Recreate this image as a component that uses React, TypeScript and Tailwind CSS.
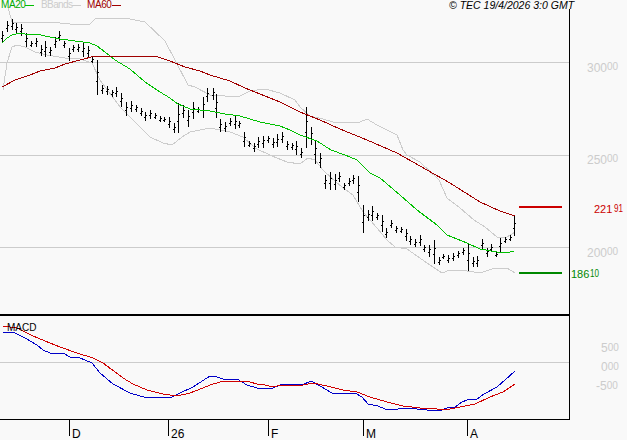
type Bar = [number, number, number];

const BARS: Bar[] = [
  [2, 31, 42], [7, 21, 32], [12, 19, 30], [16, 23, 33], [21, 24, 36], [26, 33, 47], [31, 41, 47], [36, 38, 47],
  [41, 45, 56], [45, 41, 57], [50, 47, 56], [55, 37, 48], [59, 31, 41], [64, 41, 48], [69, 48, 61], [73, 45, 52],
  [78, 44, 52], [83, 43, 57], [88, 46, 58], [92, 57, 63], [97, 60, 95], [102, 85, 94], [107, 86, 95], [112, 90, 97],
  [116, 87, 97], [121, 93, 107], [126, 102, 116], [131, 101, 112], [136, 105, 112], [141, 108, 116], [145, 112, 121],
  [150, 110, 119], [155, 113, 119], [160, 116, 122], [164, 117, 122], [169, 117, 128], [174, 123, 133], [178, 103, 133],
  [183, 105, 118], [188, 110, 127], [193, 102, 119], [198, 107, 113], [203, 97, 118], [207, 88, 102], [213, 88, 100],
  [216, 94, 118], [220, 119, 132], [225, 122, 132], [230, 118, 126], [235, 116, 129], [239, 121, 128], [244, 132, 147],
  [249, 141, 147], [254, 143, 152], [258, 137, 148], [263, 136, 148], [268, 136, 143], [273, 138, 148], [277, 134, 147],
  [282, 132, 143], [287, 141, 150], [292, 143, 150], [296, 141, 155], [301, 148, 158], [306, 107, 148], [311, 127, 145],
  [315, 140, 164], [320, 153, 168], [325, 175, 189], [330, 172, 190], [335, 174, 190], [339, 172, 182], [344, 183, 190],
  [349, 178, 186], [353, 175, 184], [358, 176, 202], [363, 205, 233], [368, 210, 221], [372, 206, 221], [377, 213, 220],
  [382, 215, 232], [386, 228, 238], [391, 220, 228], [396, 226, 233], [401, 227, 233], [406, 229, 241], [410, 236, 245],
  [415, 239, 247], [420, 235, 246], [424, 245, 252], [429, 245, 257], [434, 240, 264], [439, 257, 265], [443, 254, 259],
  [448, 255, 263], [453, 253, 261], [458, 251, 258], [463, 248, 255], [468, 243, 271], [473, 257, 267], [477, 256, 267],
  [482, 239, 249], [487, 248, 257], [491, 244, 252], [496, 252, 257], [500, 238, 252], [505, 237, 243], [510, 235, 241],
  [514, 216, 236],
];

const MA20 =
  "2,43 7,38 12,35 20,33 25,34 36,34 50,37 60,39 75,41 90,43 97,46 105,52 115,60 130,69 145,82 160,92 170,98 178,104 190,109 200,110 210,111 225,114 240,116 260,122 280,126 290,130 300,135 317,141 331,150 345,155 357,160 370,173 380,178 400,195 417,210 437,225 447,235 467,243 480,249 497,252 510,252 514,251";
const MA60 =
  "2,87 15,80 30,75 40,71 55,68 65,64 80,60 95,56 155,56 170,61 185,67 200,71 210,75 230,81 245,88 260,94 280,102 300,112 320,120 340,129 367,140 397,153 420,166 427,170 450,183 480,202 500,211 515,216";
const BB_UP =
  "8,7 12,22 30,22 50,22 70,24 90,24 95,19 105,18 130,19 145,22 165,41 175,60 188,85 195,87 210,95 225,96 240,96 250,91 265,89 280,93 295,100 300,107 310,116 323,119 333,122 360,122 367,119 377,125 397,135 403,150 407,155 420,162 439,180 447,198 460,208 474,220 485,227 497,237 507,237 515,232";
const BB_LOW =
  "3,90 7,63 12,47 17,45 25,47 35,52 47,55 65,58 80,59 92,63 100,80 120,107 133,120 150,137 163,143 172,145 182,137 190,132 210,128 230,132 243,137 255,148 272,156 287,162 300,164 308,158 315,160 323,170 337,183 353,195 363,212 377,228 387,240 395,247 407,249 417,256 430,265 442,273 450,270 467,271 480,273 495,268 507,268 515,273";
const MACD =
  "3,332 13,332 25,338 37,345 43,350 50,353 63,353 70,357 80,358 92,363 100,373 113,384 130,393 147,398 157,397 172,397 180,393 193,387 210,376 217,377 223,379 237,379 247,385 257,388 273,388 282,384 293,384 302,385 311,381 320,386 332,393 350,394 355,393 362,397 368,404 378,406 385,409 398,409 402,408 417,409 427,410 439,411 447,408 455,407 462,402 467,400 477,399 484,394 497,387 505,380 515,371";
const SIGNAL =
  "3,326 17,328 33,336 50,343 60,347 77,353 93,358 103,363 123,378 133,384 147,390 163,394 177,396 190,393 203,388 210,385 220,382 233,381 250,382 257,384 265,385 273,387 282,385 303,385 313,383 327,386 343,390 357,392 370,397 387,402 403,406 420,408 437,409 450,409 460,407 475,404 490,397 503,392 515,384";

const GRID_Y = [62, 155, 247, 362];
const MONTHS: [number, string][] = [[69, "D"], [168, "26"], [268, "F"], [363, "M"], [467, "A"]];
// big figure, then small figure
const PRICES: [number, number, string, string][] = [
  [587, 72, "300", "00"],
  [587, 257, "200", "00"],
  [587, 164, "250", "00"],
];
const MACD_LABELS: [number, number, string, string][] = [
  [601, 352, "5", "00"],
  [601, 371, "0", "00"],
  [596, 390, "-5", "00"],
];

function Chart() {
  return (
    <svg width={627} height={440} viewBox="0 0 627 440" className="block" fontFamily="'Liberation Sans', Arial, sans-serif">
      {GRID_Y.map((y) => (
        <rect key={y} x={0} y={y} width={569} height={1} fill="#cccccc" />
      ))}

      <g fill="none" strokeWidth={1} shapeRendering="crispEdges">
        <polyline points={BB_UP} stroke="#cccccc" />
        <polyline points={BB_LOW} stroke="#cccccc" />
      </g>

      {BARS.map(([x, hi, lo]) => (
        <g key={x} fill="#000000">
          <rect x={x} y={hi} width={1} height={lo - hi} />
          <rect x={x - 1} y={Math.round(hi + (lo - hi) * 0.6)} width={1} height={1} />
          <rect x={x + 1} y={Math.round(hi + (lo - hi) * 0.35)} width={1} height={1} />
        </g>
      ))}

      <g fill="none" strokeWidth={1} shapeRendering="crispEdges">
        <polyline points={MA20} stroke="#00c000" />
        <polyline points={MA60} stroke="#a00000" />
        <polyline points={MACD} stroke="#0000c8" />
        <polyline points={SIGNAL} stroke="#d00000" />
      </g>

      <rect x={569} y={9} width={1} height={411} fill="#000000" />
      <rect x={0} y={314} width={570} height={2} fill="#000000" />
      <rect x={0} y={419} width={570} height={1} fill="#000000" />

      <rect x={519} y={206} width={43} height={2} fill="#cc0000" />
      <rect x={519} y={272} width={43} height={2} fill="#008800" />

      {MONTHS.map(([x, label]) => (
        <g key={label}>
          <rect x={x} y={420} width={1} height={16} fill="#000000" />
          <text x={x + 3} y={438} fontSize={12} fill="#000000">{label}</text>
        </g>
      ))}

      {PRICES.map(([x, y, big, small]) => (
        <text key={big} x={x} y={y} fontSize={12} fill="#cccccc">
          {big}
          <tspan fontSize={10} dy={-2}>{small}</tspan>
        </text>
      ))}

      {MACD_LABELS.map(([x, y, big, small]) => (
        <text key={big} x={x} y={y} fontSize={12} fill="#cccccc">
          {big}
          <tspan fontSize={10} dy={-1}>{small}</tspan>
        </text>
      ))}

      <text x={594} y={213} fontSize={11} fill="#cc0000">221</text>
      <text x={614} y={212} fontSize={11} fill="#cc0000" textLength={9} lengthAdjust="spacingAndGlyphs">91</text>
      <text x={571} y={278} fontSize={11} fill="#008800">186</text>
      <text x={590} y={277} fontSize={11} fill="#008800" textLength={9} lengthAdjust="spacingAndGlyphs">10</text>

      <text x={7} y={331} fontSize={10} fill="#000000">MACD</text>
    </svg>
  );
}

export default function App() {
  return (
    <div className="relative w-[627px] h-[440px] overflow-hidden bg-[#f9f9f9] font-['Liberation_Sans',Arial,sans-serif]">
      <Chart />
      <div className="absolute top-0 left-[1px] flex items-center text-[10px] leading-[10px]">
        <span className="w-[24px] tracking-[-0.4px] text-[#00aa00]">MA20</span>
        <span className="w-[9px] h-px bg-[#00c000]" />
        <span className="ml-[7px] w-[31px] tracking-[-0.6px] text-[#cccccc]">BBands</span>
        <span className="w-[9px] h-px bg-[#cccccc]" />
        <span className="ml-[6px] w-[25px] tracking-[-0.4px] text-[#a00000]">MA60</span>
        <span className="w-[9px] h-px bg-[#a00000]" />
      </div>
      <div className="absolute top-0 left-[449px] text-[10.5px] leading-[11px] italic text-black whitespace-nowrap">
        © TEC 19/4/2026 3:0 GMT
      </div>
    </div>
  );
}
